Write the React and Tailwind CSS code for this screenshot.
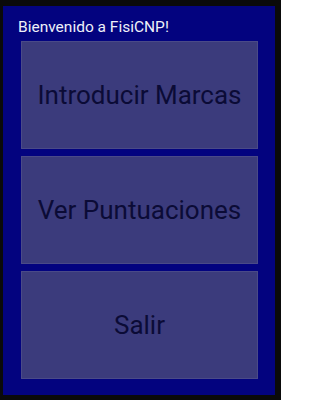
export default function App() {
  const items = ["Introducir Marcas", "Ver Puntuaciones", "Salir"];
  return (
    <div className="w-[281px] h-[400px] bg-[#0a0a0a] pt-[6px] pl-[3px] pr-[6px] pb-[5px]" style={{ fontFamily: "Roboto, 'Liberation Sans', sans-serif" }}>
      <div className="h-full bg-[#03037f] flex flex-col">
        <div className="h-[35px] pl-[15px] pt-[12px] text-[15.5px] leading-[18px] text-[#eef0f8]">Bienvenido a FisiCNP!</div>
        <div className="flex flex-col gap-[7px] pl-[18px] pr-[17px]">
          {items.map((t) => (
            <button key={t} className="h-[108px] w-full bg-[#3b3b7c] border border-[#4a4a88] flex items-center justify-center text-[26px] text-[#0b0b36]">
              {t}
            </button>
          ))}
        </div>
      </div>
    </div>
  );
}
